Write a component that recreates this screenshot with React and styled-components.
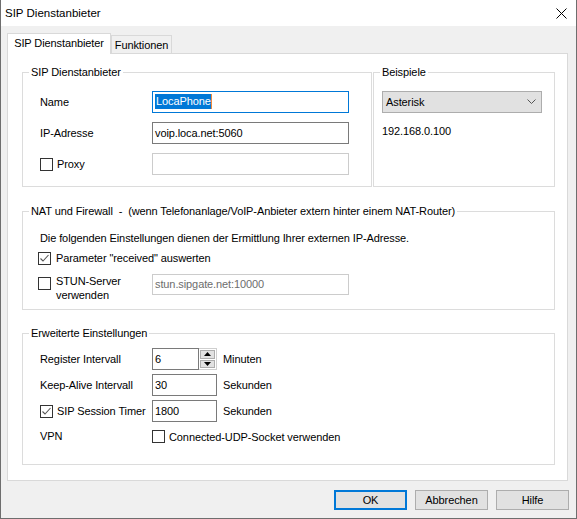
import React from "react";
import styled, { createGlobalStyle } from "styled-components";

const GlobalStyle = createGlobalStyle`
  html, body { margin:0; padding:0; background:#fff; }
  body {
    font-family: "Liberation Sans", Arial, sans-serif;
    font-size: 11px;
    letter-spacing: -0.1px;
    color: #000;
  }
  * { box-sizing: border-box; }
`

const Window = styled.div`
  width: 577px;
  height: 519px;
  border: 1px solid #6e6e6e;
  border-top: none;
  background: #f0f0f0;
  display: flex;
  flex-direction: column;
`
const TitleBar = styled.div`
  height: 26px;
  background: #fff;
  display: flex;
  align-items: center;
  justify-content: space-between;
  padding: 0 9px 0 4px;
  font-size: 11.5px;
  letter-spacing: 0;
`
const Body = styled.div`
  flex: 1;
  display: flex;
  flex-direction: column;
  padding: 7px 8px 0 6px;
`
const TabStrip = styled.div`
  display: flex;
  align-items: flex-end;
  height: 21px;
  margin-bottom: -1px;
  position: relative;
  z-index: 1;
`
const Tab = styled.div`
  height: ${p => (p.$active ? 21 : 18)}px;
  margin-bottom: ${p => (p.$active ? 0 : 1)}px;
  width: ${p => p.$w}px;
  border: 1px solid #d9d9d9;
  border-bottom: none;
  background: ${p => (p.$active ? "#fff" : "#f0f0f0")};
  display: flex;
  align-items: center;
  justify-content: center;
  padding-bottom: ${p => (p.$active ? 2 : 0)}px;
`
const TabPage = styled.div`
  height: 428px;
  background: #fff;
  border: 1px solid #d9d9d9;
  padding: 12px 12px 0 14px;
  display: flex;
  flex-direction: column;
`
const GroupRow = styled.div`
  display: flex;
  gap: 1px;
`
const Group = styled.fieldset`
  margin: ${p => p.$mt || 0}px 0 0 0;
  padding: 0;
  border: 1px solid #dcdcdc;
  min-width: 0;
  width: ${p => p.$w}px;
  height: ${p => p.$h}px;
  display: block;
`
const Legend = styled.legend`
  padding: 0 2px;
  margin-left: 6px;
  line-height: 13px;
  white-space: pre;
`
const GroupBody = styled.div`
  padding: ${p => p.$pt}px 0 0 ${p => p.$pl}px;
`
const Rows = styled.div`
  display: flex;
  flex-direction: column;
  gap: ${p => p.$gap}px;
`
const Row = styled.div`
  display: flex;
  align-items: ${p => p.$align || "center"};
  height: ${p => p.$h || 22}px;
  margin-top: ${p => p.$mt || 0}px;
`
const Label = styled.div`
  width: ${p => p.$w || 112}px;
  flex-shrink: 0;
  line-height: 13px;
  display: flex;
  align-items: ${p => p.$align || "center"};
  margin-left: ${p => p.$ml || 0}px;
`
const Input = styled.div`
  width: ${p => p.$w}px;
  height: ${p => p.$h || 22}px;
  border: 1px solid ${p => p.$border || "#7a7a7a"};
  background: #fff;
  color: ${p => p.$color || "#000"};
  padding: 0 0 1px 2px;
  display: flex;
  align-items: center;
  white-space: nowrap;
`
const Selected = styled.span`
  background: #0078d7;
  color: #fff;
  line-height: 15px;
  padding: 0 0 0 1px;
  border-right: 1px solid #f08a3c;
`
const Unit = styled.div`
  margin-left: 6px;
  line-height: 13px;
`
const Text = styled.div`
  line-height: 13px;
  margin-top: ${p => p.$mt || 0}px;
`
const CheckWrap = styled.div`
  display: flex;
  align-items: ${p => p.$align || "center"};
  gap: ${p => p.$gap || 4}px;
  margin-left: ${p => p.$ml || 0}px;
  margin-top: ${p => p.$mt || 0}px;
  line-height: 14px;
`
const Box = styled.div`
  width: 13px;
  height: 13px;
  flex-shrink: 0;
  border: 1px solid #333;
  background: #fff;
  margin-top: ${p => p.$mt || 0}px;
  display: flex;
  align-items: center;
  justify-content: center;
`
const Combo = styled.div`
  width: 160px;
  height: 22px;
  border: 1px solid #adadad;
  background: #e1e1e1;
  display: flex;
  align-items: center;
  justify-content: space-between;
  padding: 0 5px 1px 3px;
`
const SpinBox = styled.div`
  width: 18px;
  height: 22px;
  border: 1px solid #cfcfcf;
  border-left: none;
  background: #fff;
  padding: 1px;
  display: flex;
  flex-direction: column;
  gap: 1px;
`
const SpinBtn = styled.div`
  flex: 1;
  background: #e1e1e1;
  border: 1px solid #adadad;
  display: flex;
  align-items: center;
  justify-content: center;
`
const ButtonRow = styled.div`
  display: flex;
  justify-content: flex-end;
  gap: 8px;
  margin: 9px -1px 0 0;
`
const Button = styled.div`
  width: 73px;
  height: 20px;
  background: #e1e1e1;
  border: ${p => (p.$default ? "2px solid #0078d7" : "1px solid #adadad")};
  display: flex;
  align-items: center;
  justify-content: center;
  padding-bottom: 1px;
`

const Check = ({ checked, mt }) => (
  <Box $mt={mt}>
    {checked && (
      <svg width="11" height="11" viewBox="0 0 11 11">
        <polyline points="1.5,5.5 4,8 9.5,2" fill="none" stroke="#555" strokeWidth="1.1" />
      </svg>
    )}
  </Box>
)

const Arrow = ({ up }) => (
  <svg width="7" height="4" viewBox="0 0 7 4">
    <polygon points={up ? "0,4 7,4 3.5,0" : "0,0 7,0 3.5,4"} fill="#000" />
  </svg>
)

export default function App() {
  return (
    <>
      <GlobalStyle />
      <Window>
        <TitleBar>
          <span>SIP Dienstanbieter</span>
          <svg width="11" height="11" viewBox="0 0 11 11">
            <path d="M0.5 0.5 L10.5 10.5 M10.5 0.5 L0.5 10.5" stroke="#000" strokeWidth="1" />
          </svg>
        </TitleBar>
        <Body>
          <TabStrip>
            <Tab $active $w={104}>SIP Dienstanbieter</Tab>
            <Tab $w={61}>Funktionen</Tab>
          </TabStrip>
          <TabPage>
            <GroupRow>
              <Group $w={350} $h={121}>
                <Legend>SIP Dienstanbieter</Legend>
                <GroupBody $pt={12} $pl={17}>
                  <Rows $gap={9}>
                    <Row>
                      <Label>Name</Label>
                      <Input $w={197} $border="#0078d7">
                        <Selected>LocaPhone</Selected>
                      </Input>
                    </Row>
                    <Row>
                      <Label>IP-Adresse</Label>
                      <Input $w={197}>voip.loca.net:5060</Input>
                    </Row>
                    <Row>
                      <Label>
                        <CheckWrap>
                          <Check />
                          <span>Proxy</span>
                        </CheckWrap>
                      </Label>
                      <Input $w={197} $border="#cccccc" />
                    </Row>
                  </Rows>
                </GroupBody>
              </Group>
              <Group $w={182} $h={121}>
                <Legend>Beispiele</Legend>
                <GroupBody $pt={12} $pl={8}>
                  <Combo>
                    <span>Asterisk</span>
                    <svg width="9" height="5" viewBox="0 0 9 5">
                      <polyline points="0.5,0.5 4.5,4.5 8.5,0.5" fill="none" stroke="#555" strokeWidth="1" />
                    </svg>
                  </Combo>
                  <Text $mt={12}>192.168.0.100</Text>
                </GroupBody>
              </Group>
            </GroupRow>

            <Group $w={533} $h={105} $mt={18}>
              <Legend>{"NAT und Firewall  -  (wenn Telefonanlage/VoIP-Anbieter extern hinter einem NAT-Router)"}</Legend>
              <GroupBody $pt={14} $pl={17}>
                <Text>Die folgenden Einstellungen dienen der Ermittlung Ihrer externen IP-Adresse.</Text>
                <CheckWrap $gap={5} $ml={-2} $mt={6}>
                  <Check checked />
                  <span>Parameter "received" auswerten</span>
                </CheckWrap>
                <Row $align="flex-start" $h={28} $mt={9}>
                  <Label $ml={-2} $w={114} $align="flex-start">
                    <CheckWrap $gap={5} $align="flex-start">
                      <Check mt={3} />
                      <span>STUN-Server<br />verwenden</span>
                    </CheckWrap>
                  </Label>
                  <Input $w={197} $h={21} $border="#cccccc" $color="#6d6d6d">
                    stun.sipgate.net:10000
                  </Input>
                </Row>
              </GroupBody>
            </Group>

            <Group $w={533} $h={138} $mt={17}>
              <Legend>Erweiterte Einstellungen</Legend>
              <GroupBody $pt={8} $pl={17}>
                <Rows $gap={4}>
                  <Row>
                    <Label>Register Intervall</Label>
                    <Input $w={47}>6</Input>
                    <SpinBox>
                      <SpinBtn><Arrow up /></SpinBtn>
                      <SpinBtn><Arrow /></SpinBtn>
                    </SpinBox>
                    <Unit>Minuten</Unit>
                  </Row>
                  <Row>
                    <Label>Keep-Alive Intervall</Label>
                    <Input $w={65}>30</Input>
                    <Unit>Sekunden</Unit>
                  </Row>
                  <Row>
                    <Label>
                      <CheckWrap>
                        <Check checked />
                        <span>SIP Session Timer</span>
                      </CheckWrap>
                    </Label>
                    <Input $w={65}>1800</Input>
                    <Unit>Sekunden</Unit>
                  </Row>
                  <Row $h={13} $mt={4}>
                    <Label>VPN</Label>
                    <CheckWrap>
                      <Check />
                      <span>Connected-UDP-Socket verwenden</span>
                    </CheckWrap>
                  </Row>
                </Rows>
              </GroupBody>
            </Group>
          </TabPage>
          <ButtonRow>
            <Button $default>OK</Button>
            <Button>Abbrechen</Button>
            <Button>Hilfe</Button>
          </ButtonRow>
        </Body>
      </Window>
    </>
  );
}
